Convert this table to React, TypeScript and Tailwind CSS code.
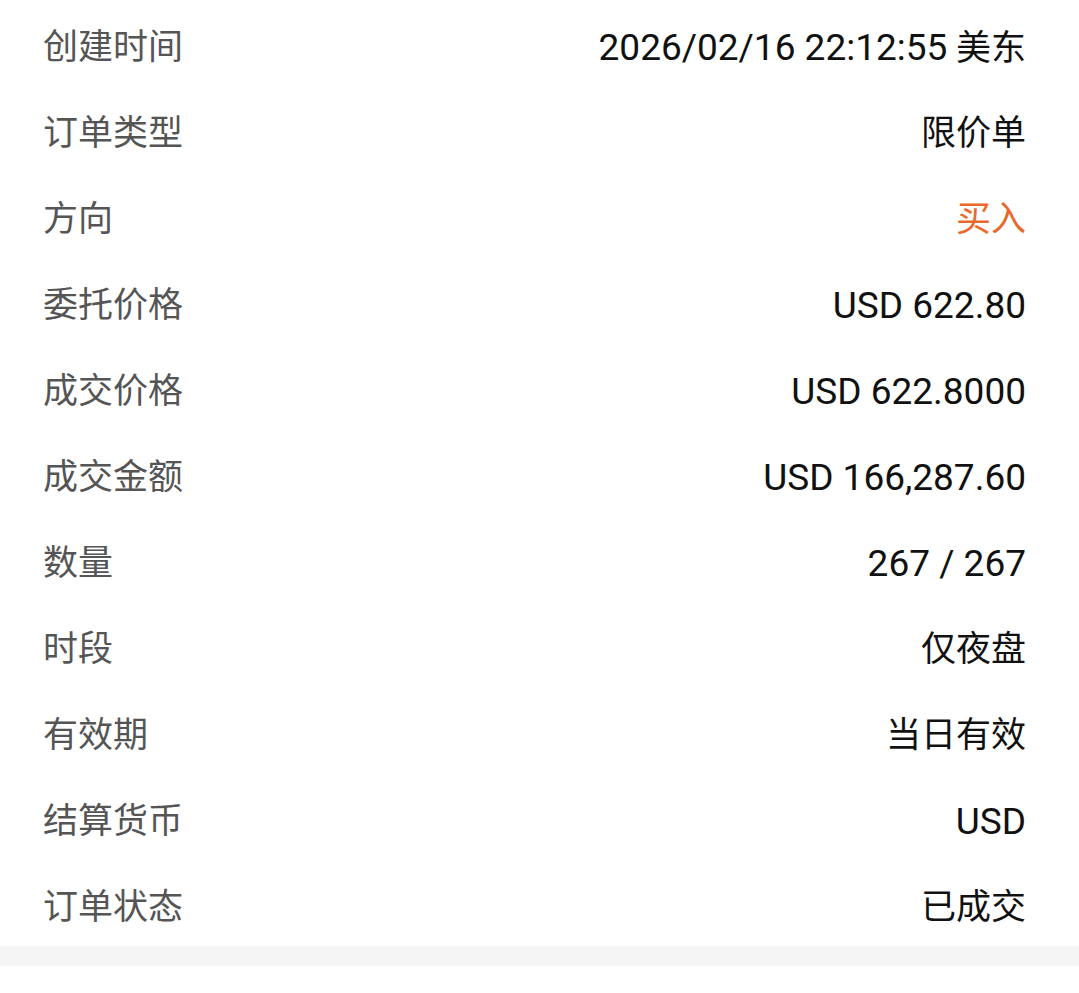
import type { ReactNode } from "react"

const rows: { label: string; value: ReactNode; accent?: boolean }[] = [
  {
    label: "创建时间",
    value: (
      <>
        <span className="text-[37px]">2026/02/16 22:12:55</span> 美东
      </>
    ),
  },
  { label: "订单类型", value: "限价单" },
  { label: "方向", value: "买入", accent: true },
  { label: "委托价格", value: <span className="text-[37px]">USD 622.80</span> },
  { label: "成交价格", value: <span className="text-[37px]">USD 622.8000</span> },
  { label: "成交金额", value: <span className="text-[37px]">USD 166,287.60</span> },
  { label: "数量", value: <span className="text-[37px]">267 / 267</span> },
  { label: "时段", value: "仅夜盘" },
  { label: "有效期", value: "当日有效" },
  { label: "结算货币", value: <span className="text-[37px]">USD</span> },
  { label: "订单状态", value: "已成交" },
]

export default function App() {
  return (
    <div
      className="w-[1079px] h-[993px] bg-white"
      style={{ fontFamily: 'Roboto, "Noto Sans CJK SC", sans-serif' }}
    >
      <div className="flex flex-col">
        {rows.map((row) => (
          <div
            key={row.label}
            className="h-[86px] pt-[8px] flex items-center justify-between pl-[43px] pr-[53px] text-[35px] leading-none"
          >
            <span className="text-[#555555]">{row.label}</span>
            <span className={row.accent ? "text-[#e8692a]" : "text-[#111111]"}>{row.value}</span>
          </div>
        ))}
      </div>
      <div className="h-[20px] bg-[#f5f5f5]" />
    </div>
  )
}
